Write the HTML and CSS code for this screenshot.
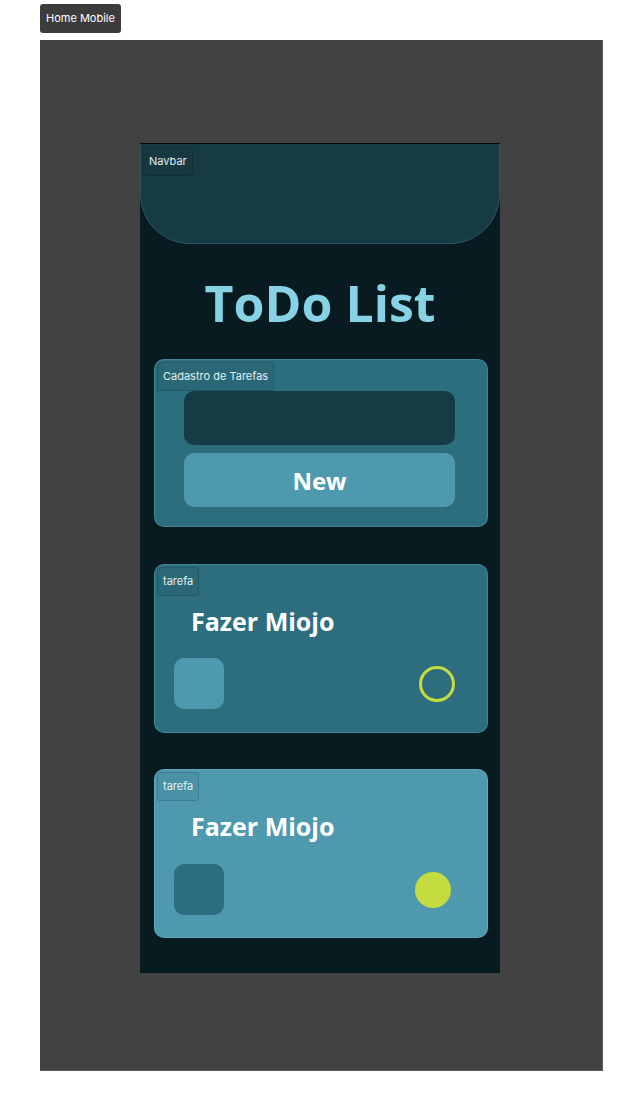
FILE: index.html
```html
<!DOCTYPE html>
<html lang="pt">
<head>
<meta charset="utf-8">
<title>Home Mobile</title>
<link rel="stylesheet" href="styles.css">
</head>
<body>
  <div class="frame-tag">Home Mobile</div>
  <div class="frame">
    <div class="phone">
      <header class="navbar">
        <span class="tag">Navbar</span>
      </header>
      <h1 class="title">ToDo List</h1>
      <section class="card card-form">
        <span class="tag">Cadastro de Tarefas</span>
        <div class="form">
          <div class="input"></div>
          <button class="btn">New</button>
        </div>
      </section>
      <section class="card card-task">
        <span class="tag">tarefa</span>
        <h2 class="task-title">Fazer Miojo</h2>
        <div class="task-row">
          <div class="square square-light"></div>
          <div class="circle circle-outline"></div>
        </div>
      </section>
      <section class="card card-task card-done">
        <span class="tag">tarefa</span>
        <h2 class="task-title">Fazer Miojo</h2>
        <div class="task-row task-row-done">
          <div class="square square-dark"></div>
          <div class="circle circle-filled"></div>
        </div>
      </section>
    </div>
  </div>
</body>
</html>
```

FILE: styles.css
```css
* { box-sizing: border-box; }

body {
  margin: 0;
  background: #ffffff;
  font-family: "Open Sans", "Liberation Sans", sans-serif;
}

.frame-tag {
  display: inline-block;
  margin: 4px 0 0 40px;
  height: 29px;
  line-height: 29px;
  padding: 0 6px;
  background: #3c3c3c;
  color: #ffffff;
  border-radius: 3px;
  font-family: Inter, "Liberation Sans", sans-serif;
  font-size: 11px;
  vertical-align: top;
}

.frame {
  margin: 7px 0 0 40px;
  width: 563px;
  height: 1031px;
  background: #424242;
  padding: 103px 0 0 100px;
  border-right: 1px solid #5a5a5a;
  border-bottom: 1px solid #5a5a5a;
}

.phone {
  width: 360px;
  height: 830px;
  background: #081b20;
  border-top: 1px solid #050b0c;
  display: flex;
  flex-direction: column;
}

.tag {
  display: block;
  align-self: flex-start;
  height: 29px;
  line-height: 27px;
  padding: 0 5px;
  font-family: Inter, "Liberation Sans", sans-serif;
  font-size: 11px;
  color: #e4eef0;
  background: rgba(0, 0, 0, 0.05);
  border: 1px solid rgba(0, 0, 0, 0.14);
  border-radius: 3px;
}

.navbar {
  height: 100px;
  background: #173b45;
  border: 1px solid #2a5561;
  border-top: none;
  border-radius: 0 0 50px 50px;
  padding: 3px 0 0 2px;
  display: flex;
}

.title {
  margin: 33px 0 0;
  text-align: center;
  font-size: 50px;
  line-height: 52px;
  font-weight: 700;
  color: #87d2e4;
  letter-spacing: 0;
}

.card {
  margin: 30px 12px 0 14px;
  border-radius: 10px;
  border: 1px solid rgba(110, 180, 195, 0.35);
  padding: 2px;
  display: flex;
  flex-direction: column;
}

.card-form {
  height: 168px;
  background: #2d6e7e;
}

.form {
  margin: 0 30px 0 27px;
  display: flex;
  flex-direction: column;
  gap: 8px;
}

.input {
  height: 54px;
  background: #173b45;
  border-radius: 10px;
}

.btn {
  height: 54px;
  border: none;
  border-radius: 10px;
  background: #4e99ae;
  color: #ffffff;
  font-family: "Open Sans", "Liberation Sans", sans-serif;
  font-weight: 700;
  font-size: 24px;
  padding: 0;
}

.card-task {
  height: 169px;
  margin-top: 37px;
  background: #2d6e7e;
}

.card-done {
  margin-top: 36px;
  background: #4e99ae;
  border-color: rgba(120, 190, 205, 0.4);
}

.task-title {
  margin: 13px 0 0 34px;
  font-size: 25px;
  line-height: 25px;
  font-weight: 700;
  color: #ffffff;
  letter-spacing: 0;
}

.task-row {
  margin-top: 24px;
  padding: 0 30px 0 17px;
  display: flex;
  align-items: center;
  justify-content: space-between;
}

.task-row-done {
  margin-top: 25px;
  padding-right: 34px;
}

.square {
  width: 50px;
  height: 51px;
  border-radius: 10px;
}

.square-light { background: #4e99ae; }
.square-dark { background: #2d6e7e; }

.circle {
  width: 36px;
  height: 36px;
  border-radius: 50%;
}

.circle-outline { border: 3px solid #c7dc3c; }
.circle-filled { background: #c5dc40; }
```
